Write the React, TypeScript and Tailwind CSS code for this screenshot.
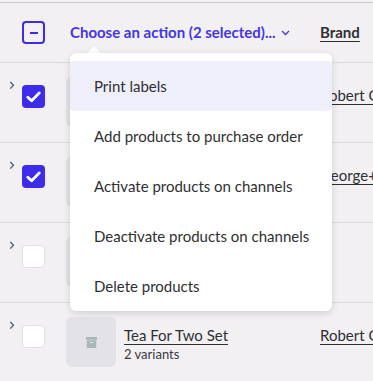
import React from "react";

const Chevron = () => (
  <svg width="6" height="9" viewBox="0 0 6 9" className="mt-[18px]">
    <path d="M1.3 1 L4.5 4.3 L1.3 7.6" fill="none" stroke="#4b5b7a" strokeWidth="1.3" />
  </svg>
);

const Checked = () => (
  <div className="w-[23px] h-[23px] rounded-[4px] bg-[#3d2ce8] flex items-center justify-center">
    <svg width="15" height="12" viewBox="0 0 15 12">
      <path d="M1.8 6.2 L5.6 9.8 L13.2 2" fill="none" stroke="white" strokeWidth="2.8" strokeLinecap="round" strokeLinejoin="round" />
    </svg>
  </div>
);

const Unchecked = () => (
  <div className="w-[23px] h-[23px] rounded-[4px] bg-white border border-[#e2e0e5]" />
);

const Thumb = () => (
  <div className="w-[50px] h-[50px] rounded-[6px] bg-[#e3e2e6] flex items-center justify-center">
    <svg width="11" height="11" viewBox="0 0 11 11">
      <rect x="0" y="0" width="11" height="2.8" fill="#a9b7ba" />
      <rect x="0.8" y="3.3" width="9.4" height="7.7" fill="#a9b7ba" />
      <rect x="4" y="5" width="3" height="1" fill="#e3e2e6" />
    </svg>
  </div>
);

type Row = { checked: boolean; name: string; variants: string; brand: string };

const rows: Row[] = [
  { checked: true, name: "", variants: "", brand: "Robert Gordon" },
  { checked: true, name: "", variants: "", brand: "George+Sons" },
  { checked: false, name: "", variants: "", brand: "" },
  { checked: false, name: "Tea For Two Set", variants: "2 variants", brand: "Robert Gordon" },
];

const items = [
  "Print labels",
  "Add products to purchase order",
  "Activate products on channels",
  "Deactivate products on channels",
  "Delete products",
];

export default function App() {
  return (
    <div
      className="relative w-[373px] h-[381px] overflow-hidden bg-[#f2f0f3] text-[#2f2f33]"
      style={{ fontFamily: "Lato, 'Noto Sans', sans-serif" }}
    >
      <div className="mt-[2px] border-t border-[#c9c8cc]" />
      {/* header */}
      <div className="h-[60px] border-b border-[#dcdadf] flex items-center">
        <div className="w-[22px] shrink-0" />
        <div className="w-[23px] h-[23px] shrink-0 rounded-[4px] border-2 border-[#3d2ce8] flex items-center justify-center">
          <div className="w-[8px] h-[2px] bg-[#3d2ce8]" />
        </div>
        <div className="ml-[25px] w-[250px] shrink-0 flex items-center text-[15px] font-bold text-[#4535e8]">
          <span>Choose an action (2 selected)...</span>
          <svg width="9" height="6" viewBox="0 0 9 6" className="ml-[5px] mt-[1px]">
            <path d="M1 1 L4.5 4.5 L8 1" fill="none" stroke="#4535e8" strokeWidth="1.3" />
          </svg>
        </div>
        <span className="text-[15px] font-bold underline underline-offset-[3px] text-[#2f2f33]">Brand</span>
      </div>
      {rows.map((r, i) => (
        <div key={i} className="h-[80px] border-b border-[#dcdadf] flex items-start">
          <div className="w-[22px] shrink-0 flex justify-center pl-[2px]">
            <Chevron />
          </div>
          <div className="mt-[22px] shrink-0">{r.checked ? <Checked /> : <Unchecked />}</div>
          <div className="ml-[21px] mt-[14px] shrink-0">
            <Thumb />
          </div>
          <div className="ml-[8px] mt-[22px] w-[196px] shrink-0 flex flex-col">
            {r.name && (
              <span className="text-[15px] leading-[20px] underline underline-offset-[3px] whitespace-nowrap">{r.name}</span>
            )}
            {r.variants && <span className="text-[13px] leading-[18px] text-[#3a3a3e]">{r.variants}</span>}
          </div>
          {r.brand && (
            <span className="mt-[22px] text-[15px] leading-[20px] underline underline-offset-[3px] whitespace-nowrap">{r.brand}</span>
          )}
        </div>
      ))}

      {/* dropdown menu */}
      <div className="absolute left-[89px] top-[48px] w-[10px] h-[10px] bg-white rotate-45 shadow-[0_0_3px_rgba(0,0,0,0.08)]" />
      <div className="absolute left-[70px] top-[53px] w-[262px] pt-[8px] bg-white rounded-[6px] shadow-[0_2px_7px_rgba(0,0,0,0.15)]">
        {items.map((t, i) => (
          <div
            key={t}
            className={`h-[50px] flex items-center pl-[24px] text-[15px] text-[#2f2f33] ${i === 0 ? "bg-[#efeefb] rounded-[4px]" : ""}`}
          >
            {t}
          </div>
        ))}
      </div>
      <div className="absolute left-[84px] top-[53px] w-[20px] h-[6px] bg-white" />
    </div>
  );
}
